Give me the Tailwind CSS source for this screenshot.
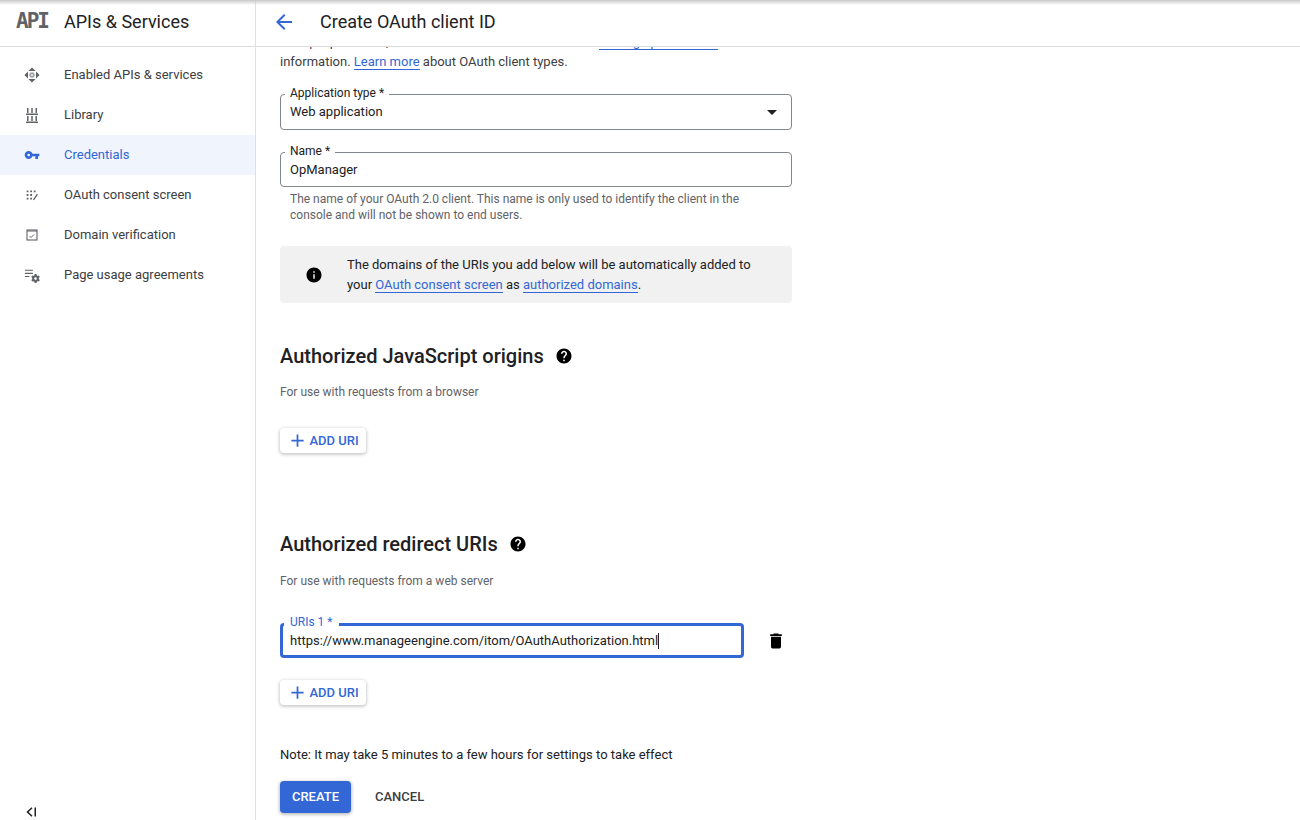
<!DOCTYPE html>
<html lang="en">
<head>
    <meta charset="UTF-8">
    <title>Create OAuth client ID</title>
    <script src="https://cdn.jsdelivr.net/npm/@tailwindcss/browser@4"></script>
</head>
<body class="relative h-[820px] w-[1300px] overflow-hidden bg-white font-['Roboto',sans-serif] text-[13px] text-[#202124]">
    <!-- shadow of the cropped top bar -->
    <div class="absolute inset-x-0 top-0 z-20 h-[5px] bg-gradient-to-b from-[#c8c8c8] to-transparent"></div>

    <div class="flex h-[820px]">
        <!-- sidebar -->
        <aside class="flex w-[256px] shrink-0 flex-col border-r border-[#e0e0e0]">
            <div class="flex h-[47px] shrink-0 items-center border-b border-[#dadce0] pb-[3px]">
                <span class="ml-[16px] w-[48px] font-['DejaVu_Sans_Mono',monospace] text-[21px] leading-none font-bold tracking-[-2px] text-[#5f6368]">API</span>
                <span class="text-[18px] text-[#202124]">APIs &amp; Services</span>
            </div>
            <nav class="mt-[8px] flex flex-col">
                <a class="flex h-[40px] items-center text-[#3c4043]">
                    <span class="flex w-[64px] justify-center">
                        <svg class="h-[16px] w-[16px]" viewBox="0 0 18 18" fill="#5f6368"><path d="M9 .5L13 4.500H5zM9 17.500L5 13.500h8zM.5 9L4.500 5v8zM17.500 9L13.500 13V5z"/><path fill-rule="evenodd" opacity=".6" d="M9 6a3 3 0 1 0 0 6 3 3 0 0 0 0-6zm0 2a1 1 0 1 1 0 2 1 1 0 0 1 0-2z"/></svg>
                    </span>
                    <span>Enabled APIs &amp; services</span>
                </a>
                <a class="flex h-[40px] items-center text-[#3c4043]">
                    <span class="flex w-[64px] justify-center">
                        <svg class="h-[18px] w-[18px]" viewBox="0 0 18 18" fill="#5f6368"><path d="M4 2h1.500v5H4zM8.250 2h1.500v5h-1.500zM12.500 2H14v5h-1.500zM4 10h1.500v5H4zM8.250 10h1.500v5h-1.500zM12.500 10H14v5h-1.500zM3 7.500h12V9H3zM3 15.500h12V17H3z"/></svg>
                    </span>
                    <span>Library</span>
                </a>
                <a class="flex h-[40px] items-center bg-[#eff4fd] text-[#3367d6]">
                    <span class="flex w-[64px] justify-center">
                        <svg class="h-[16px] w-[16px]" viewBox="0 0 24 24" fill="#3367d6"><path d="M12.650 10C11.830 7.670 9.610 6 7 6c-3.310 0-6 2.690-6 6s2.690 6 6 6c2.610 0 4.830-1.670 5.650-4H17v4h4v-4h2v-4H12.650zM7 14c-1.100 0-2-.9-2-2s.9-2 2-2 2 .9 2 2-.9 2-2 2z"/></svg>
                    </span>
                    <span>Credentials</span>
                </a>
                <a class="flex h-[40px] items-center text-[#3c4043]">
                    <span class="flex w-[64px] justify-center">
                        <svg class="h-[16px] w-[16px]" viewBox="0 0 18 18" fill="#5f6368"><path d="M3 4h2v2H3zM7 4h2v2H7zM11 4h2v2h-2zM3 8h2v2H3zM7 8h2v2H7zM3 12h2v2H3zM7 12h2v2H7zM10.500 13.500l4-6 1.200.8-4 6-1.700.5z"/></svg>
                    </span>
                    <span>OAuth consent screen</span>
                </a>
                <a class="flex h-[40px] items-center text-[#3c4043]">
                    <span class="flex w-[64px] justify-center">
                        <svg class="h-[18px] w-[18px]" viewBox="0 0 18 18" fill="none" stroke="#5f6368"><rect x="4" y="4" width="10" height="10" stroke-width="1.100"/><path d="M4 5h10" stroke-width="1"/><path d="M6.500 10l1.500 1.500 3-3" stroke-width="1"/></svg>
                    </span>
                    <span>Domain verification</span>
                </a>
                <a class="flex h-[40px] items-center text-[#3c4043]">
                    <span class="flex w-[64px] justify-center">
                        <svg class="h-[16px] w-[16px]" viewBox="0 0 18 18" fill="#5f6368"><path d="M1 3h9v1.300H1zM1 6.500h9v1.300H1zM1 10h5v1.300H1z"/><path fill-rule="evenodd" d="M12 8h2l.3 1.300 1.200.7 1.300-.4 1 1.700-1 .9v1.600l1 .9-1 1.700-1.300-.4-1.200.7L14 18h-2l-.3-1.300-1.200-.7-1.300.4-1-1.700 1-.9v-1.600l-1-.9 1-1.700 1.300.4 1.200-.7zm1 3.500a1.500 1.500 0 1 0 0 3 1.500 1.500 0 0 0 0-3z"/></svg>
                    </span>
                    <span>Page usage agreements</span>
                </a>
            </nav>
            <div class="mt-auto mb-[2px] ml-[25px]">
                <svg class="h-[12px] w-[12px]" viewBox="0 0 12 12" fill="#202124"><path d="M6.500 1.200L7.500 2.300 3.600 6l3.900 3.700-1 1.100L1.400 6zM9.500 1.500H11v9H9.500z"/></svg>
            </div>
        </aside>

        <!-- main column -->
        <div class="flex min-w-0 flex-1 flex-col">
            <header class="relative z-10 flex h-[47px] shrink-0 items-center border-b border-[#dadce0] bg-white pb-[3px]">
                <svg class="ml-[16px] h-[24px] w-[24px]" viewBox="0 0 24 24" fill="#3367d6"><path d="M20 11H7.830l5.590-5.590L12 4l-8 8 8 8 1.410-1.410L7.830 13H20v-2z"/></svg>
                <h1 class="ml-[24px] text-[18px] text-[#202124]">Create OAuth client ID</h1>
            </header>

            <main class="min-h-0 flex-1 overflow-hidden pl-[24px]">
                <div class="w-[512px]">
                    <p class="mt-[-15px] leading-[20px] whitespace-nowrap text-[#3c4043]">
                        multiple platforms, each will need its own client ID. See <a class="border-b border-[#3367d6] text-[#3367d6]">Setting up OAuth 2.0</a> for more<br>
                        information. <a class="border-b border-[#3367d6] text-[#3367d6]">Learn more</a> about OAuth client types.
                    </p>

                    <div class="relative mt-[22px] flex h-[36px] items-center justify-between rounded-[4px] border border-[#80868b] pr-[14px] pl-[9px]">
                        <label class="absolute top-[-10px] left-[4px] bg-white px-[5px] text-[12px] leading-[16px] text-[#202124]">Application type *</label>
                        <span class="text-[#202124]">Web application</span>
                        <span class="h-0 w-0 border-x-[5px] border-t-[5px] border-x-transparent border-t-[#202124]"></span>
                    </div>

                    <div class="relative mt-[22px] flex h-[35px] items-center rounded-[4px] border border-[#80868b] pl-[9px]">
                        <label class="absolute top-[-10px] left-[4px] bg-white px-[5px] text-[12px] leading-[16px] text-[#202124]">Name *</label>
                        <span class="text-[#202124]">OpManager</span>
                    </div>
                    <p class="mt-[4px] px-[10px] text-[12px] leading-[16px] text-[#5f6368]">The name of your OAuth 2.0 client. This name is only used to identify the client in the console and will not be shown to end users.</p>

                    <div class="mt-[23px] flex h-[57px] items-center rounded-[4px] bg-[#f1f1f1] pr-[16px]">
                        <span class="flex w-[67px] shrink-0 justify-center">
                            <svg class="h-[18px] w-[18px]" viewBox="0 0 24 24" fill="#000"><path d="M12 2C6.480 2 2 6.480 2 12s4.480 10 10 10 10-4.480 10-10S17.520 2 12 2zm1 15h-2v-6h2v6zm0-8h-2V7h2v2z"/></svg>
                        </span>
                        <p class="leading-[20px] text-[#202124]">The domains of the URIs you add below will be automatically added to your <a class="border-b border-[#3367d6] text-[#3367d6]">OAuth consent screen</a> as <a class="border-b border-[#3367d6] text-[#3367d6]">authorized domains</a>.</p>
                    </div>

                    <div class="mt-[38px] flex h-[30px] items-center">
                        <h2 class="text-[20px] font-medium text-[#202124]">Authorized JavaScript origins</h2>
                        <svg class="ml-[11px] h-[18px] w-[18px]" viewBox="0 0 24 24" fill="#000"><path d="M12 2C6.480 2 2 6.480 2 12s4.480 10 10 10 10-4.480 10-10S17.520 2 12 2zm1 17h-2v-2h2v2zm2.070-7.750l-.9.920C13.450 12.900 13 13.500 13 15h-2v-.5c0-1.100.450-2.100 1.170-2.830l1.240-1.260c.370-.360.590-.860.590-1.410 0-1.100-.9-2-2-2s-2 .9-2 2H8c0-2.210 1.790-4 4-4s4 1.790 4 4c0 .880-.360 1.680-.930 2.250z"/></svg>
                    </div>
                    <p class="mt-[13px] text-[12px] leading-[16px] text-[#5f6368]">For use with requests from a browser</p>

                    <button class="mt-[28px] flex h-[25px] w-[86px] items-center justify-center gap-[1px] rounded-[4px] bg-white text-[13px] font-medium text-[#3367d6] shadow-[0_1px_3px_1px_rgba(60,64,67,.25)]">
                        <svg class="h-[21px] w-[21px]" viewBox="0 0 24 24" fill="#3367d6"><path d="M19 13h-6v6h-2v-6H5v-2h6V5h2v6h6v2z"/></svg>
                        ADD URI
                    </button>

                    <div class="mt-[76px] flex h-[30px] items-center">
                        <h2 class="text-[20px] font-medium text-[#202124]">Authorized redirect URIs</h2>
                        <svg class="ml-[11px] h-[18px] w-[18px]" viewBox="0 0 24 24" fill="#000"><path d="M12 2C6.480 2 2 6.480 2 12s4.480 10 10 10 10-4.480 10-10S17.520 2 12 2zm1 17h-2v-2h2v2zm2.070-7.750l-.9.920C13.450 12.900 13 13.500 13 15h-2v-.5c0-1.100.450-2.100 1.170-2.830l1.240-1.260c.370-.360.590-.860.590-1.410 0-1.100-.9-2-2-2s-2 .9-2 2H8c0-2.210 1.790-4 4-4s4 1.790 4 4c0 .880-.360 1.680-.930 2.250z"/></svg>
                    </div>
                    <p class="mt-[14px] text-[12px] leading-[16px] text-[#5f6368]">For use with requests from a web server</p>

                    <div class="mt-[34px] flex items-center">
                        <div class="relative flex h-[35px] w-[464px] items-center rounded-[4px] border-[3px] border-[#3367d6] pl-[7px]">
                            <label class="absolute top-[-12px] left-[1px] bg-white px-[6px] text-[12px] leading-[16px] text-[#3367d6]">URIs 1 *</label>
                            <span class="text-[#202124]">https://www.manageengine.com/itom/OAuthAuthorization.html</span>
                            <span class="h-[16px] w-px bg-[#202124]"></span>
                        </div>
                        <svg class="ml-[22px] h-[20px] w-[20px]" viewBox="0 0 24 24" fill="#000"><path d="M6 19c0 1.100.9 2 2 2h8c1.100 0 2-.9 2-2V7H6v12zM19 4h-3.500l-1-1h-5l-1 1H5v2h14V4z"/></svg>
                    </div>

                    <button class="mt-[22px] flex h-[25px] w-[86px] items-center justify-center gap-[1px] rounded-[4px] bg-white text-[13px] font-medium text-[#3367d6] shadow-[0_1px_3px_1px_rgba(60,64,67,.25)]">
                        <svg class="h-[21px] w-[21px]" viewBox="0 0 24 24" fill="#3367d6"><path d="M19 13h-6v6h-2v-6H5v-2h6V5h2v6h6v2z"/></svg>
                        ADD URI
                    </button>

                    <p class="mt-[40px] leading-[20px] text-[#202124]">Note: It may take 5 minutes to a few hours for settings to take effect</p>

                    <div class="mt-[16px] flex items-center">
                        <button class="h-[32px] w-[71px] rounded-[4px] bg-[#3367d6] text-[13px] font-medium text-white shadow-[0_1px_3px_1px_rgba(60,64,67,.3)]">CREATE</button>
                        <button class="ml-[24px] text-[13px] font-medium text-[#3c4043]">CANCEL</button>
                    </div>
                </div>
            </main>
        </div>
    </div>
</body>
</html>
